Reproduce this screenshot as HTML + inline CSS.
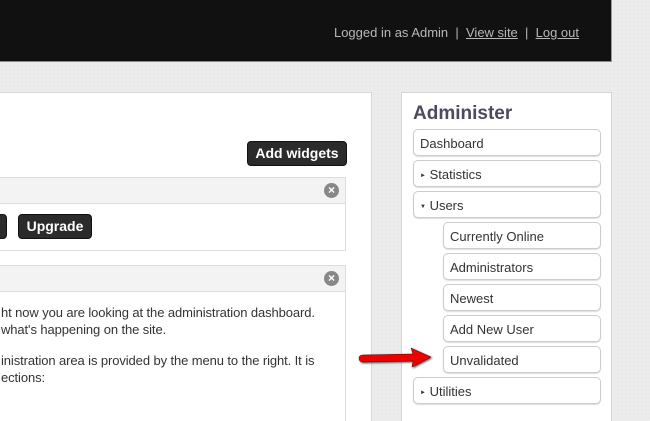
<!DOCTYPE html>
<html style="overflow:hidden;height:421px"><head><style>
body{margin:0;width:650px;height:421px;overflow:hidden;position:relative;font-family:"Liberation Sans",Arial,sans-serif;
background-color:#ececec;background-image:radial-gradient(#e0e0e0 0.6px,transparent 0.8px);background-size:4px 4px;}
.hdr{position:absolute;left:0;top:0;width:611px;height:61px;background:#111;border-bottom:1px solid #888;border-right:1px solid #999}
.hdr .t{position:absolute;right:32px;top:25px;color:#b8b8b8;font-size:13px}
.hdr a{color:#b8b8b8;text-decoration:underline}
.main{position:absolute;left:-2px;top:92px;width:372px;height:329px;background:#fff;border:1px solid #d8d8d8;border-bottom:0;overflow:hidden}
.btn{position:absolute;background:#2b2b2b;color:#fff;font-weight:bold;font-size:14px;border-radius:4px;text-align:center;line-height:23px;border:1px solid #111}
.w{position:absolute;left:-1px;width:346px;border:1px solid #ddd;background:#fff}
.wh{height:25px;background:#f3f3f3;border-bottom:1px solid #ddd;position:relative}
.x{position:absolute;right:6px;top:5px;width:15px;height:15px;border-radius:50%;background:#888;color:#fff;font-size:12px;font-weight:bold;text-align:center;line-height:15px}
.txt{position:absolute;font-size:13px;color:#333;line-height:17px;white-space:nowrap;letter-spacing:-0.1px}
.side{position:absolute;left:401px;top:92px;width:209px;height:329px;background:#fff;border:1px solid #d4d4d4;border-bottom:0}
.side h2{position:absolute;left:11px;top:10px;margin:0;font-size:19px;color:#4d4a5e;font-weight:bold}
.it{position:absolute;height:27px;border:1px solid #ccc;border-radius:5px;background:#fff;font-size:13px;color:#333;line-height:27px;padding-left:6px;box-sizing:border-box;box-shadow:0 1px 1px #ddd}
.tr{font-size:6px;vertical-align:2px}
</style></head><body>
<div class="hdr"><div class="t">Logged in as Admin &nbsp;|&nbsp; <a>View site</a> &nbsp;|&nbsp; <a>Log out</a></div></div>
<div class="main">
<div class="btn" style="left:248px;top:48px;width:98px">Add widgets</div>
<div class="w" style="top:84px;height:72px"><div class="wh"><div class="x">×</div></div></div>
<div class="btn" style="left:-8px;top:121px;width:14px">&nbsp;</div>
<div class="btn" style="left:19px;top:121px;width:72px">Upgrade</div>
<div class="w" style="top:172px;height:170px"><div class="wh"><div class="x">×</div></div></div>
<div class="txt" style="left:2px;top:211px">ht now you are looking at the administration dashboard.<br>what's happening on the site.</div>
<div class="txt" style="left:2px;top:259px">inistration area is provided by the menu to the right. It is<br>ections:</div>
</div>
<div class="side"><h2>Administer</h2></div>
<div class="it" style="left:413px;top:129px;width:188px">Dashboard</div>
<div class="it" style="left:413px;top:160px;width:188px"><span class="tr">►</span> Statistics</div>
<div class="it" style="left:413px;top:191px;width:188px"><span class="tr">▼</span> Users</div>
<div class="it" style="left:443px;top:222px;width:158px">Currently Online</div>
<div class="it" style="left:443px;top:253px;width:158px">Administrators</div>
<div class="it" style="left:443px;top:284px;width:158px">Newest</div>
<div class="it" style="left:443px;top:315px;width:158px">Add New User</div>
<div class="it" style="left:443px;top:346px;width:158px">Unvalidated</div>
<div class="it" style="left:413px;top:377px;width:188px"><span class="tr">►</span> Utilities</div>
<svg style="position:absolute;left:355px;top:345px" width="80" height="26"><path d="M4 13 Q4 10 8 10 L58 9 L56 3 L76 12 L57 22 L58 16 L8 17 Q4 17 4 13Z" fill="#e00" stroke="#600" stroke-width="0.5" style="filter:drop-shadow(1px 1px 1px #444)"/></svg>
</body></html>
